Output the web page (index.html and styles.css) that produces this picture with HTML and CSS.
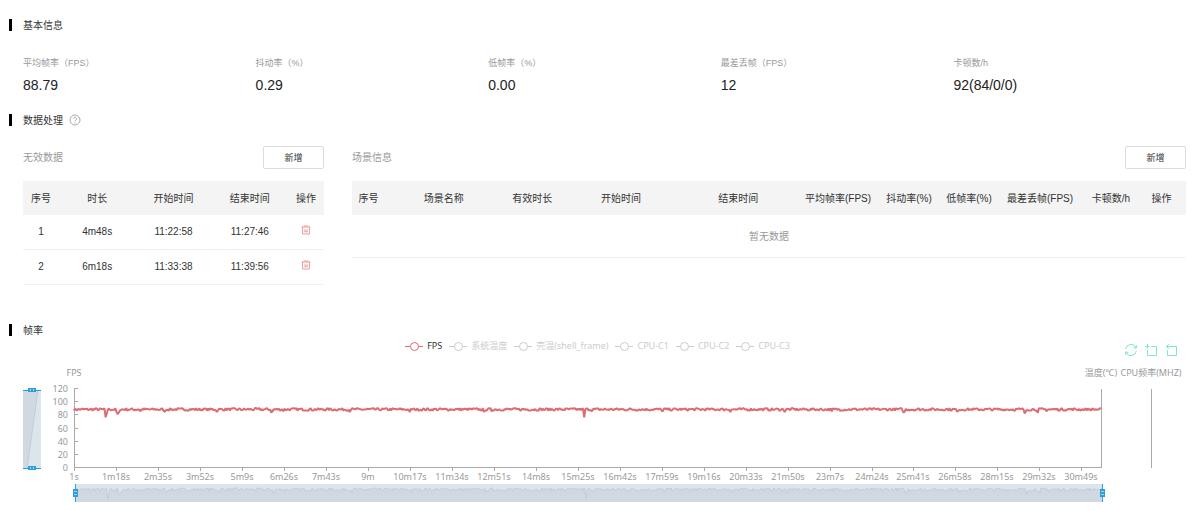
FILE: index.html
```html
<!DOCTYPE html>
<html lang="zh-CN">

<head>
  <meta charset="UTF-8">
  <meta name="viewport" content="width=device-width, initial-scale=1.0">
  <title>帧率</title>
  <link rel="stylesheet" href="styles.css">
</head>

<body>
  <section>
    <h2 class="section-title">基本信息</h2>
    <dl class="metrics">
      <div>
        <dt>平均帧率（FPS）</dt>
        <dd>88.79</dd>
      </div>
      <div>
        <dt>抖动率（%）</dt>
        <dd>0.29</dd>
      </div>
      <div>
        <dt>低帧率（%）</dt>
        <dd>0.00</dd>
      </div>
      <div>
        <dt>最差丢帧（FPS）</dt>
        <dd>12</dd>
      </div>
      <div>
        <dt>卡顿数/h</dt>
        <dd>92(84/0/0)</dd>
      </div>
    </dl>
  </section>

  <section>
    <h2 class="section-title">数据处理
      <svg class="help-icon" viewBox="0 0 12 12" aria-hidden="true">
        <circle cx="6" cy="6" r="5" />
        <path d="M4.4 4.8a1.6 1.6 0 1 1 2.4 1.4c-.6.3-.8.5-.8 1.1M6 8.2v1" />
      </svg>
    </h2>
    <div class="panels">
      <div class="panel">
        <div class="panel-head">
          <h3>无效数据</h3>
          <button type="button" class="add-button">新增</button>
        </div>
        <table>
          <colgroup>
            <col class="col-edge">
            <col>
            <col>
            <col>
            <col class="col-edge">
          </colgroup>
          <thead>
            <tr>
              <th>序号</th>
              <th>时长</th>
              <th>开始时间</th>
              <th>结束时间</th>
              <th>操作</th>
            </tr>
          </thead>
          <tbody>
            <tr>
              <td>1</td>
              <td>4m48s</td>
              <td>11:22:58</td>
              <td>11:27:46</td>
              <td>
                <button type="button" class="delete-button" aria-label="删除">
                  <svg viewBox="0 0 10 10">
                    <path d="M.5 2h9M2.5 1h5M1.6 2v7h6.8V2M4 4.2v2.6M6 4.2v2.6M3.4 6.8h3.2" />
                  </svg>
                </button>
              </td>
            </tr>
            <tr>
              <td>2</td>
              <td>6m18s</td>
              <td>11:33:38</td>
              <td>11:39:56</td>
              <td>
                <button type="button" class="delete-button" aria-label="删除">
                  <svg viewBox="0 0 10 10">
                    <path d="M.5 2h9M2.5 1h5M1.6 2v7h6.8V2M4 4.2v2.6M6 4.2v2.6M3.4 6.8h3.2" />
                  </svg>
                </button>
              </td>
            </tr>
          </tbody>
        </table>
      </div>

      <div class="panel panel-scene">
        <div class="panel-head">
          <h3>场景信息</h3>
          <button type="button" class="add-button">新增</button>
        </div>
        <table>
          <colgroup>
            <col class="col-index">
            <col>
            <col class="col-small">
            <col>
            <col>
            <col class="col-large">
            <col class="col-small">
            <col class="col-small">
            <col class="col-large">
            <col class="col-small">
            <col class="col-action">
          </colgroup>
          <thead>
            <tr>
              <th>序号</th>
              <th>场景名称</th>
              <th>有效时长</th>
              <th>开始时间</th>
              <th>结束时间</th>
              <th>平均帧率(FPS)</th>
              <th>抖动率(%)</th>
              <th>低帧率(%)</th>
              <th>最差丢帧(FPS)</th>
              <th>卡顿数/h</th>
              <th class="last">操作</th>
            </tr>
          </thead>
          <tbody>
            <tr>
              <td colspan="11" class="empty">暂无数据</td>
            </tr>
          </tbody>
        </table>
      </div>
    </div>
  </section>

  <section>
    <h2 class="section-title">帧率</h2>
    <div class="chart-head">
      <div class="legend">
        <button type="button" class="active"><i></i>FPS</button>
        <button type="button"><i></i>系统温度</button>
        <button type="button"><i></i>壳温(shell_frame)</button>
        <button type="button"><i></i>CPU-C1</button>
        <button type="button"><i></i>CPU-C2</button>
        <button type="button"><i></i>CPU-C3</button>
      </div>
      <div class="toolbox">
        <button type="button" aria-label="刷新">
          <svg viewBox="0 0 14 14">
            <path d="M1.6 6A5.5 5.5 0 0 1 12 4.6M12.4 8A5.5 5.5 0 0 1 2 9.4M12.6 2.4l-.4 2.8-2.6-.8M1.4 11.6l.4-2.8 2.6.8" />
          </svg>
        </button>
        <button type="button" aria-label="区域缩放">
          <svg viewBox="0 0 14 14">
            <path d="M1 3.5h4.5M3.5 1v4.5M7 3.5h5.5v9h-9V7" />
          </svg>
        </button>
        <button type="button" aria-label="区域缩放还原">
          <svg viewBox="0 0 14 14">
            <path d="M2.5 3.5h10v9h-9V7M4.8 1.2L2.5 3.5l2.3 2.3" />
          </svg>
        </button>
      </div>
    </div>
    <svg id="chart" class="chart" role="img" aria-label="帧率"></svg>
  </section>

  <script src="chart.js"></script>
</body>

</html>
```
FILE: styles.css
```css
* {
  box-sizing: border-box;
}

body {
  font-family: "Liberation Sans", "Noto Sans CJK SC", sans-serif;
  font-size: 10px;
  color: #333;
  background-color: white;
  margin: 0;
  padding: 15px 14px 0 9px;
}

h2,
h3,
dl,
dd {
  margin: 0;
  font-weight: normal;
}

button {
  background: none;
  border: none;
  padding: 0;
  font-family: inherit;
  color: inherit;
  cursor: pointer;
}

svg {
  display: block;
  fill: none;
}

.section-title {
  display: flex;
  align-items: center;
  height: 20px;
  padding-bottom: 2px;
  font-size: 10px;
}

.section-title::before {
  content: "";
  width: 3px;
  height: 12px;
  margin: 2px 11px 0 0;
  background-color: black;
}

.help-icon {
  width: 12px;
  height: 12px;
  margin: 2px 0 0 6px;
  stroke: #aaa;
}

.metrics {
  display: grid;
  grid-template-columns: repeat(5, 1fr);
  margin-left: 14px;
  padding: 21px 0 15px;
}

.metrics dt {
  font-size: 9px;
  line-height: 14px;
  color: #999;
}

.metrics dd {
  margin-top: 5px;
  font-size: 14px;
  line-height: 20px;
  color: #222;
}

.panels {
  display: flex;
  gap: 28px;
  margin-left: 14px;
  padding: 16px 0 35px;
}

.panel {
  flex: 0 0 301px;
}

.panel-scene {
  flex: 1;
}

.panel-head {
  display: flex;
  justify-content: space-between;
  align-items: center;
  margin-bottom: 12px;
}

.panel-head h3 {
  padding-bottom: 2px;
  font-size: 10px;
  color: #999;
}

.add-button {
  width: 61px;
  height: 23px;
  border: 1px solid #dcdcdc;
  border-radius: 2px;
  font-size: 9px;
}

table {
  width: 100%;
  table-layout: fixed;
  border-collapse: separate;
  border-spacing: 0;
  text-align: center;
}

th,
td {
  height: 34px;
  padding: 0 0 2px;
  font-weight: normal;
  white-space: nowrap;
}

th {
  background-color: #f4f4f4;
}

td {
  height: 35px;
  border-bottom: 1px solid #f0f0f0;
}

.empty {
  height: 43px;
  color: #999;
}

.last {
  padding-right: 4px;
}

.col-edge {
  width: 36px;
}

.col-index {
  width: 33px;
}

.col-small {
  width: 60px;
}

.col-large {
  width: 82px;
}

.col-action {
  width: 45px;
}

.delete-button svg {
  width: 10px;
  height: 10px;
  stroke: #eb9a9a;
}

.chart-head {
  display: grid;
  grid-template-columns: 1fr auto 1fr;
  height: 20px;
  font-family: "Noto Sans", "Noto Sans CJK SC", sans-serif;
}

.legend {
  grid-column: 2;
  display: flex;
  gap: 7px;
  height: 12px;
}

.legend button {
  display: flex;
  align-items: center;
  gap: 4px;
  font-size: 9px;
  line-height: 12px;
  color: #ccc;
}

.legend .active {
  color: #333;
}

.legend i {
  display: flex;
  align-items: center;
  justify-content: center;
  width: 18px;
  height: 11px;
  background: linear-gradient(#ccc, #ccc) center / 100% 1px no-repeat;
}

.legend i::before {
  content: "";
  width: 7px;
  height: 7px;
  border: 1px solid #ccc;
  border-radius: 50%;
  background-color: white;
}

.legend .active i {
  background-image: linear-gradient(#dd6b73, #dd6b73);
}

.legend .active i::before {
  border-color: #dd6b73;
}

.toolbox {
  display: flex;
  justify-content: flex-end;
  align-items: flex-end;
  gap: 6px;
  padding: 0 8px 3px 0;
}

.toolbox svg {
  width: 14px;
  height: 14px;
  stroke: #7de8c3;
}

.chart {
  width: calc(100% - 14px);
  height: 145px;
  margin-left: 14px;
  font-family: "Noto Sans", "Noto Sans CJK SC", sans-serif;
  font-size: 9px;
}

.chart text {
  fill: #999;
}

.middle {
  text-anchor: middle;
}

.end {
  text-anchor: end;
}

.axis {
  stroke: #aaa;
}

.series {
  stroke: #dd6b73;
  stroke-width: 2;
  stroke-linejoin: bevel;
}

.slider {
  fill: #dce4ec;
}

.slider-shadow {
  fill: #d0d8e2;
}

.slider-line {
  stroke: #c3ccd9;
}

.handle {
  fill: #2c9fd9;
}

.grip {
  stroke: #a5d8f1;
}
```
FILE: chart.js
```js
const chart = document.getElementById('chart');

const TOP = 29;
const BOTTOM = 108;
const LEFT = 51;
const MAX_FPS = 120;
const DURATION = 1884;
const LABEL_STEP = 77;

// Seconds at which the frame rate dropped, and the value reached
const drops = {
  58: 77, 60: 82, 78: 85, 80: 82, 82: 84, 122: 86, 166: 85, 262: 85,
  362: 84, 364: 86, 384: 86, 506: 85, 616: 85, 752: 85, 766: 86, 936: 77,
  950: 86, 1080: 86, 1204: 85, 1304: 85, 1390: 86, 1522: 84, 1524: 86,
  1620: 85, 1744: 83, 1746: 86, 1768: 84, 1784: 86
};

function buildSamples() {
  const samples = [];
  let seed = 7;
  for (let t = 0; t <= DURATION; t += 2) {
    seed = (seed * 16807) % 2147483647;
    const noise = seed / 2147483647;
    samples.push([t, drops[t] || 87 + noise * 4]);
  }
  return samples;
}

function formatTime(seconds) {
  const m = Math.floor(seconds / 60);
  const s = seconds % 60;
  return (m ? m + 'm' : '') + (s ? s + 's' : '');
}

function rect(cls, x, y, width, height) {
  return `<rect class="${cls}" x="${x}" y="${y}" width="${width}" height="${height}"/>`;
}

function path(cls, d) {
  return `<path class="${cls}" d="${d}"/>`;
}

function text(cls, x, y, content) {
  return `<text class="${cls}" x="${x}" y="${y}">${content}</text>`;
}

function draw() {
  const width = chart.clientWidth;
  const right = width - 85;
  const farAxis = width - 35;
  const toX = t => LEFT + (t / DURATION) * (right - LEFT);
  const toY = v => BOTTOM - (v / MAX_FPS) * (BOTTOM - TOP);
  const samples = buildSamples();
  let out = '';

  // Axes
  out += path('axis', `M${LEFT + 0.5} ${TOP}V${BOTTOM}M${LEFT} ${BOTTOM - 0.5}H${right}`);
  out += path('axis', `M${right + 0.5} ${TOP}V${BOTTOM}M${farAxis + 0.5} ${TOP}V${BOTTOM}`);
  out += text('middle', LEFT, 16, 'FPS');
  out += text('middle', right, 16, '温度(℃)');
  out += text('middle', farAxis, 16, 'CPU频率(MHZ)');

  for (let v = 0; v <= MAX_FPS; v += 20) {
    const y = Math.round(toY(v));
    out += path('axis', `M${LEFT} ${y - 0.5}h4`);
    out += text('end', LEFT - 6, y + 3, v);
  }

  for (let t = 1; t < DURATION; t += LABEL_STEP) {
    const x = Math.round(toX(t - 1));
    out += path('axis', `M${x + 0.5} ${BOTTOM}v3`);
    out += text('middle', x, 120, formatTime(t));
  }

  // FPS line
  out += path('series', 'M' + samples.map(([t, v]) => `${toX(t).toFixed(1)} ${toY(v).toFixed(1)}`).join('L'));

  // Horizontal zoom slider
  const mini = samples.map(([t, v]) => `${(toX(t) + 2).toFixed(1)} ${(129.5 + (89 - v) * 0.8).toFixed(1)}`).join('L');
  out += rect('slider', LEFT + 2, 124, right - LEFT, 18);
  out += path('slider-shadow', `M${LEFT + 2} 142L${mini}V142Z`);
  out += path('slider-line', 'M' + mini);
  [LEFT + 1, right + 1].forEach(x => {
    out += rect('handle', x, 124, 1, 18);
    out += rect('handle', x - 2, 129, 5, 8);
    out += path('grip', `M${x - 1} 131.5h3M${x - 1} 134.5h3`);
  });

  // Vertical zoom slider
  out += rect('slider', 0, 30, 18, 79);
  out += path('slider-shadow', 'M0 30H15L4 109H0Z');
  out += path('slider-line', 'M15 30L4 109');
  [30, 108].forEach(y => {
    out += rect('handle', 0, y, 18, 1);
    out += rect('handle', 5, y - 2, 8, 4);
    out += path('grip', `M7.5 ${y - 1}v2M10.5 ${y - 1}v2`);
  });

  chart.innerHTML = out;
}

draw();
window.addEventListener('resize', draw);
```
